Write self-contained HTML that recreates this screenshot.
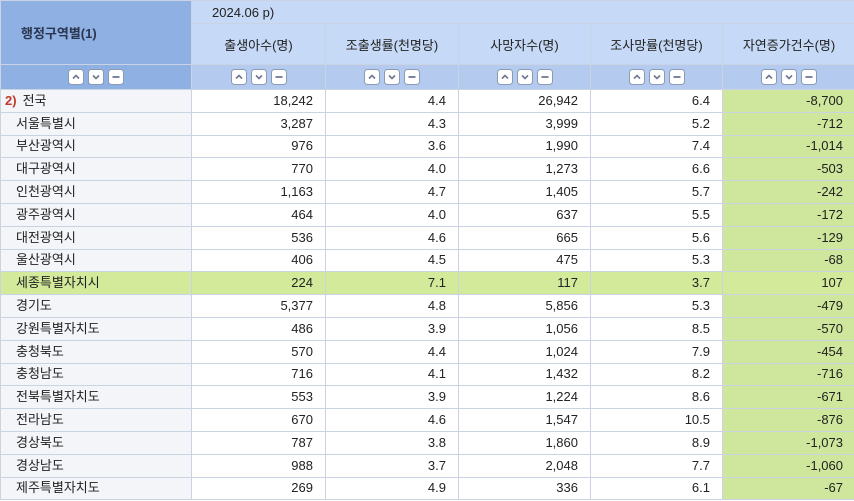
<!DOCTYPE html><html><head><meta charset="utf-8"><style>
body{margin:0;width:854px;height:501px;overflow:hidden;background:#fff;font-family:"Liberation Sans","Noto Sans CJK KR",sans-serif;font-size:13px;color:#222}
table{border-collapse:collapse;table-layout:fixed;width:855px;position:absolute;left:0;top:0}
td,th{border:1px solid #c9d3e2;padding:0 12px;overflow:hidden;white-space:nowrap;font-weight:normal}
th{background:#c6d9f6;color:#222}
th.l{background:#8fb0e2;font-weight:bold;color:#2a3550;text-align:center}
tr.h1 th{height:22px;text-align:left;padding-left:20px}
tr.h2 th{height:40px;text-align:center}
tr.h3 th{height:24px;text-align:center;background:#b4cbef;padding:0}
tr.h3 th.l{background:#8fb0e2}
td{height:21.8px;text-align:right;line-height:20px}
td.n{text-align:left;background:#f3f5f9;padding-left:15px}
td.g{background:#cfe79c}
tr.s td{background:#d3ea9b}
svg.b{width:16px;height:16px;margin:0 2px;vertical-align:middle}
.r{color:#c0392b;font-weight:bold;margin-left:-11px;margin-right:6px}
</style></head><body>
<svg width="0" height="0" style="position:absolute"><defs>
<g id="u"><rect x="0.5" y="0.5" width="15" height="15" rx="3" fill="#fff" stroke="#8c9bb3"/><path d="M5 9.5 L8 6.5 L11 9.5" fill="none" stroke="#6b7890" stroke-width="1.6"/></g>
<g id="d"><rect x="0.5" y="0.5" width="15" height="15" rx="3" fill="#fff" stroke="#8c9bb3"/><path d="M5 6.5 L8 9.5 L11 6.5" fill="none" stroke="#6b7890" stroke-width="1.6"/></g>
<g id="m"><rect x="0.5" y="0.5" width="15" height="15" rx="3" fill="#fff" stroke="#8c9bb3"/><path d="M4.5 8 H11.5" stroke="#6b7890" stroke-width="1.8"/></g>
</defs></svg>
<table>
<colgroup><col style="width:191px"><col style="width:134px"><col style="width:133px"><col style="width:132px"><col style="width:132px"><col style="width:133px"></colgroup>
<tr class="h1"><th class="l" rowspan="2">행정구역별(1)</th><th colspan="5">2024.06 p)</th></tr>
<tr class="h2"><th>출생아수(명)</th><th>조출생률(천명당)</th><th>사망자수(명)</th><th>조사망률(천명당)</th><th>자연증가건수(명)</th></tr>
<tr class="h3">
<th class="l"><svg class="b"><use href="#u"/></svg><svg class="b"><use href="#d"/></svg><svg class="b"><use href="#m"/></svg></th>
<th><svg class="b"><use href="#u"/></svg><svg class="b"><use href="#d"/></svg><svg class="b"><use href="#m"/></svg></th>
<th><svg class="b"><use href="#u"/></svg><svg class="b"><use href="#d"/></svg><svg class="b"><use href="#m"/></svg></th>
<th><svg class="b"><use href="#u"/></svg><svg class="b"><use href="#d"/></svg><svg class="b"><use href="#m"/></svg></th>
<th><svg class="b"><use href="#u"/></svg><svg class="b"><use href="#d"/></svg><svg class="b"><use href="#m"/></svg></th>
<th><svg class="b"><use href="#u"/></svg><svg class="b"><use href="#d"/></svg><svg class="b"><use href="#m"/></svg></th></tr>
<tr><td class="n"><span class="r">2)</span>전국</td><td>18,242</td><td>4.4</td><td>26,942</td><td>6.4</td><td class="g">-8,700</td></tr>
<tr><td class="n">서울특별시</td><td>3,287</td><td>4.3</td><td>3,999</td><td>5.2</td><td class="g">-712</td></tr>
<tr><td class="n">부산광역시</td><td>976</td><td>3.6</td><td>1,990</td><td>7.4</td><td class="g">-1,014</td></tr>
<tr><td class="n">대구광역시</td><td>770</td><td>4.0</td><td>1,273</td><td>6.6</td><td class="g">-503</td></tr>
<tr><td class="n">인천광역시</td><td>1,163</td><td>4.7</td><td>1,405</td><td>5.7</td><td class="g">-242</td></tr>
<tr><td class="n">광주광역시</td><td>464</td><td>4.0</td><td>637</td><td>5.5</td><td class="g">-172</td></tr>
<tr><td class="n">대전광역시</td><td>536</td><td>4.6</td><td>665</td><td>5.6</td><td class="g">-129</td></tr>
<tr><td class="n">울산광역시</td><td>406</td><td>4.5</td><td>475</td><td>5.3</td><td class="g">-68</td></tr>
<tr class="s"><td class="n">세종특별자치시</td><td>224</td><td>7.1</td><td>117</td><td>3.7</td><td class="g">107</td></tr>
<tr><td class="n">경기도</td><td>5,377</td><td>4.8</td><td>5,856</td><td>5.3</td><td class="g">-479</td></tr>
<tr><td class="n">강원특별자치도</td><td>486</td><td>3.9</td><td>1,056</td><td>8.5</td><td class="g">-570</td></tr>
<tr><td class="n">충청북도</td><td>570</td><td>4.4</td><td>1,024</td><td>7.9</td><td class="g">-454</td></tr>
<tr><td class="n">충청남도</td><td>716</td><td>4.1</td><td>1,432</td><td>8.2</td><td class="g">-716</td></tr>
<tr><td class="n">전북특별자치도</td><td>553</td><td>3.9</td><td>1,224</td><td>8.6</td><td class="g">-671</td></tr>
<tr><td class="n">전라남도</td><td>670</td><td>4.6</td><td>1,547</td><td>10.5</td><td class="g">-876</td></tr>
<tr><td class="n">경상북도</td><td>787</td><td>3.8</td><td>1,860</td><td>8.9</td><td class="g">-1,073</td></tr>
<tr><td class="n">경상남도</td><td>988</td><td>3.7</td><td>2,048</td><td>7.7</td><td class="g">-1,060</td></tr>
<tr><td class="n">제주특별자치도</td><td>269</td><td>4.9</td><td>336</td><td>6.1</td><td class="g">-67</td></tr>
</table>
</body></html>
